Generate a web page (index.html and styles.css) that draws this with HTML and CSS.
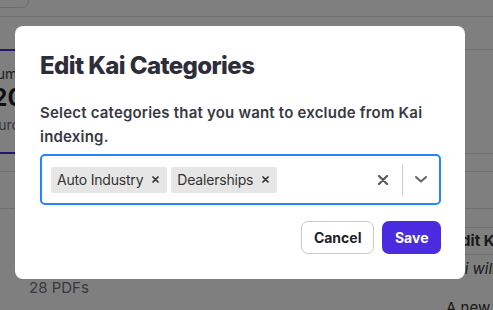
FILE: index.html
```html
<!DOCTYPE html>
<html lang="en">
<head>
<meta charset="utf-8">
<title>Edit Kai Categories</title>
<link rel="stylesheet" href="styles.css">
</head>
<body>
<div class="page">
  <div class="topbar"><div class="topbtn"></div></div>
  <div class="stats">
    <div class="stat active">
      <div class="stat-label">Documents</div>
      <div class="stat-num">20</div>
      <div class="stat-sub">Sources</div>
    </div>
    <div class="stat"></div>
    <div class="stat"></div>
    <div class="stat"></div>
    <div class="stat"></div>
  </div>
  <div class="table-head"></div>
  <div class="lower">
    <div class="left"><div class="pdfs">28 PDFs</div></div>
    <div class="right">
      <div class="right-head">Edit Kai Categories</div>
      <div class="right-note">Kai will not index the excluded categories.</div>
      <div class="right-text">A new category was added</div>
    </div>
  </div>
</div>

<div class="overlay">
  <div class="modal">
    <h2 class="modal-title">Edit Kai Categories</h2>
    <p class="modal-text">Select categories that you want to exclude from Kai indexing.</p>
    <div class="select">
      <div class="chips">
        <div class="chip">
          <span class="chip-label">Auto Industry</span>
          <span class="chip-x"><svg width="7" height="7" viewBox="0 0 7 7"><path d="M1 1L6 6M6 1L1 6" stroke="#333" stroke-width="1.7" stroke-linecap="round"/></svg></span>
        </div>
        <div class="chip">
          <span class="chip-label">Dealerships</span>
          <span class="chip-x"><svg width="7" height="7" viewBox="0 0 7 7"><path d="M1 1L6 6M6 1L1 6" stroke="#333" stroke-width="1.7" stroke-linecap="round"/></svg></span>
        </div>
      </div>
      <span class="clear"><svg width="10" height="10" viewBox="0 0 10 10"><path d="M1 1L9 9M9 1L1 9" stroke="#5a5a5a" stroke-width="2.2" stroke-linecap="round"/></svg></span>
      <span class="sep"></span>
      <span class="chev"><svg width="12" height="7" viewBox="0 0 12 7"><path d="M1 1L6 5.6L11 1" fill="none" stroke="#666" stroke-width="2" stroke-linecap="round" stroke-linejoin="round"/></svg></span>
    </div>
    <div class="actions">
      <button class="btn btn-cancel">Cancel</button>
      <button class="btn btn-save">Save</button>
    </div>
  </div>
</div>
</body>
</html>
```

FILE: styles.css
```css
html, body {
  margin: 0;
  padding: 0;
  background: #ffffff;
  font-family: Inter, "Noto Sans", sans-serif;
  overflow: hidden;
  width: 493px;
  height: 310px;
}

.page {
  width: 493px;
  height: 310px;
  overflow: hidden;
}

.topbar {
  height: 16px;
  border-bottom: 1px solid #dedede;
  overflow: hidden;
}

.topbtn {
  width: 40px;
  height: 18px;
  margin: -12px 0 0 -13px;
  border: 1px solid #d4d4d4;
  border-radius: 7px;
}

.stats {
  display: flex;
  gap: 12px;
  margin-top: 32px;
  margin-left: -42px;
}

.stat {
  flex: 0 0 100px;
  height: 105px;
  box-sizing: border-box;
  border: 1px solid #dcdcdc;
}

.stat.active {
  border: 2px solid #4b2be0;
  border-left: none;
  border-right: none;
  text-align: center;
  padding-top: 14px;
  color: #3a3a44;
  white-space: nowrap;
}

.stat-label {
  font-size: 14px;
  line-height: 18px;
}

.stat-num {
  font-size: 24px;
  line-height: 30px;
  font-weight: 700;
  color: #1e1e26;
}

.stat-sub {
  font-size: 14px;
  line-height: 20px;
  margin-top: 2px;
  color: #6e6e78;
}

.table-head {
  margin-top: 17px;
  height: 36px;
  border-top: 1px solid #dcdcdc;
  border-bottom: 1px solid #dcdcdc;
}

.lower {
  display: flex;
}

.left {
  flex: 0 0 446px;
}

.pdfs {
  padding: 69px 0 0 29px;
  font-size: 15px;
  line-height: 20px;
  color: #72727c;
}

.right {
  flex: 1;
  white-space: nowrap;
}

.right-head {
  margin-top: 18px;
  height: 26px;
  border-top: 1px solid #dcdcdc;
  border-bottom: 1px solid #dcdcdc;
  font-size: 15px;
  line-height: 26px;
  font-weight: 700;
  color: #333;
  padding-left: 6px;
}

.right-note {
  margin-top: 4px;
  font-size: 15px;
  line-height: 20px;
  font-style: italic;
  color: #333;
}

.right-text {
  margin-top: 19px;
  font-size: 15px;
  line-height: 20px;
  color: #333;
}

/* overlay + modal */
.overlay {
  position: fixed;
  inset: 0;
  background: rgba(0, 0, 0, 0.5);
  display: flex;
  align-items: flex-start;
  padding: 26px 0 0 15px;
}

.modal {
  width: 450px;
  box-sizing: border-box;
  padding: 25px 24px 25px 25px;
  background: #ffffff;
  border-radius: 8px;
}

.modal-title {
  margin: 0;
  font-size: 24px;
  line-height: 29px;
  font-weight: 800;
  letter-spacing: -0.6px;
  color: #2e2e3a;
}

.modal-text {
  margin: 21px 0 5px;
  font-size: 15px;
  line-height: 24px;
  font-weight: 600;
  letter-spacing: 0.2px;
  color: #383844;
}

.select {
  height: 51px;
  box-sizing: border-box;
  border: 2px solid #2684ff;
  border-radius: 5px;
  display: flex;
  align-items: center;
  padding-left: 9px;
}

.chips {
  flex: 1;
  display: flex;
  gap: 4px;
}

.chip {
  display: flex;
  align-items: center;
  height: 26px;
  background: #e6e6e6;
  border-radius: 2px;
}

.chip-label {
  padding: 0 3px 0 6px;
  font-size: 14px;
  letter-spacing: -0.2px;
  color: #333333;
}

.chip-x {
  display: flex;
  padding: 0 8px 0 6px;
}

.clear {
  display: flex;
  margin-right: 14px;
}

.sep {
  width: 1px;
  height: 32px;
  background: #cccccc;
}

.chev {
  display: flex;
  margin: 0 12px;
}

.actions {
  display: flex;
  justify-content: flex-end;
  gap: 8px;
  margin-top: 16px;
}

.btn {
  height: 33px;
  border-radius: 7px;
  font-family: Inter, "Noto Sans", sans-serif;
  font-size: 14px;
  font-weight: 700;
  cursor: pointer;
}

.btn-cancel {
  padding: 0 12px;
  background: #ffffff;
  border: 1px solid #c9c9c9;
  color: #1f1f29;
}

.btn-save {
  padding: 0 12.5px;
  background: #4b2be0;
  border: none;
  color: #ffffff;
}
```
